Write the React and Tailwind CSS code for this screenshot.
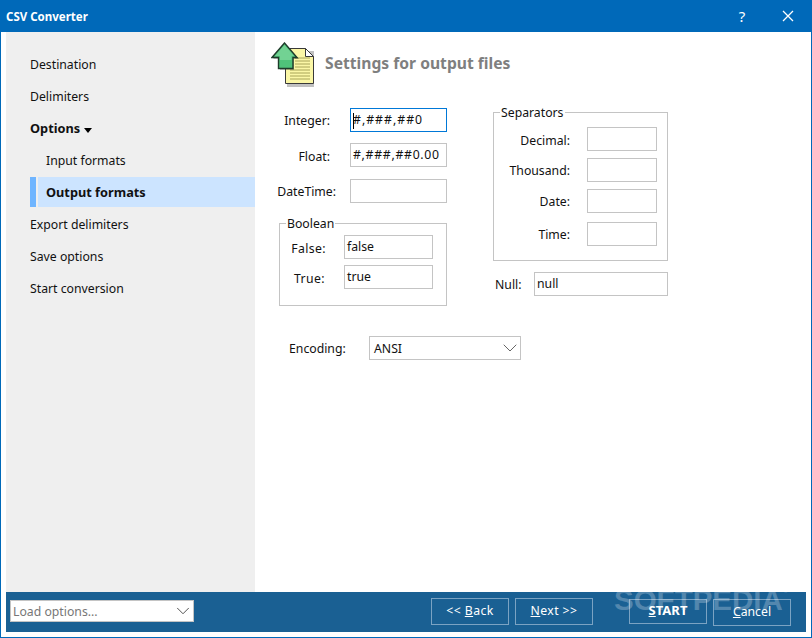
import React from 'react';
import { ChevronDown } from 'lucide-react';

const FONT = "font-['Noto_Sans','Liberation_Sans',sans-serif]";

const navItems = [
    { label: 'Destination' },
    { label: 'Delimiters' },
    { label: 'Options', bold: true, caret: true },
    { label: 'Input formats', sub: true },
    { label: 'Output formats', sub: true, active: true },
    { label: 'Export delimiters' },
    { label: 'Save options' },
    { label: 'Start conversion' },
];

const HeaderIcon = () => (
    <svg width="48" height="46" viewBox="0 0 48 46">
        <path d="M16 9h27v36H16z" fill="#333" opacity="0.3" />
        <path d="M14.500 6.500h20l8 8v27h-28z" fill="#fbf7a6" stroke="#3a3a3a" />
        <path d="M34.500 6.500v8h8z" fill="#fff" stroke="#3a3a3a" />
        <path d="M24 16h15M24 19h15M24 22h15M24 25h15M19 28h20M19 31h20M19 34h20M19 37h20" stroke="#a8a458" />
        <path d="M9 28h14V17h5L15 3 2 17h7z" fill="#333" opacity="0.3" />
        <path d="M13.500 1L1 15.500H7.500V26.500H22V15.500H26z" fill="#4fc27a" stroke="#1e3b2a" strokeWidth="1.400" />
        <path d="M13.500 3L4 14H9V18H20.500V14H23z" fill="#8fe0a8" opacity="0.55" />
    </svg>
);

const Input = ({ value, className = '', focused }) => (
    <div className={`h-[24px] box-border border bg-white px-[2px] text-[12.250px] leading-[22px] text-[#111] whitespace-nowrap ${focused ? 'border-[#0078d7]' : 'border-[#c4c4c4]'} ${className}`}>
        {focused && <span className="inline-block w-px h-[16px] bg-black align-middle -mr-px" />}
        {value}
    </div>
);

const Field = ({ label, labelClass, value, inputClass, focused, className = '' }) => (
    <div className={`flex items-center ${className}`}>
        <div className={`text-[12.250px] text-[#111] text-right whitespace-nowrap box-border pt-[2px] ${labelClass}`}>{label}</div>
        <Input value={value} className={inputClass} focused={focused} />
    </div>
);

const Group = ({ title, className = '', children }) => (
    <fieldset className={`border border-[#c4c4c4] box-border ${className}`}>
        <legend className="ml-[6px] px-px text-[12.250px] leading-[16px] text-[#111]"><span className="block translate-y-px">{title}</span></legend>
        {children}
    </fieldset>
);

const BarButton = ({ children, className = '' }) => (
    <button className={`w-[78px] box-border border border-[#7ba3c3] text-[12.250px] text-white flex items-center justify-center ${className}`}>
        {children}
    </button>
);

const App = () => {
    return (
        <div className={`relative w-[812px] h-[638px] overflow-hidden bg-white flex flex-col ${FONT}`}>
            <div className="h-[32px] shrink-0 bg-[#0069b9] flex items-center pl-[6px] text-white">
                <div className="flex-1 text-[11.500px] font-bold pt-[2px]">CSV Converter</div>
                <div className="w-[20px] mr-[30px] text-center text-[15px]">?</div>
                <svg width="12" height="12" viewBox="0 0 12 12" className="mr-[18px]">
                    <path d="M1 1l10 10M11 1L1 11" stroke="#fff" strokeWidth="1.300" />
                </svg>
            </div>

            <div className="flex-1 flex flex-col border-x border-b border-[#0069b9] px-[5px] pb-[5px] min-h-0">
                <div className="flex-1 flex min-h-0">
                    <div className="w-[249px] shrink-0 bg-[#efefef] pt-[17px] pl-[24px]">
                        {navItems.map((item) => (
                            <div key={item.label} className={`h-[32px] flex items-stretch text-[#111] ${item.bold || item.active ? 'font-bold text-[12.750px]' : 'text-[12.250px]'}`}>
                                {item.active && <div className="w-[6px] h-[30px] bg-[#6fb5ff] mr-[2px]" />}
                                <div className={`h-[30px] flex-1 flex items-center pt-[2px] ${item.active ? 'bg-[#cce4ff] pl-[8px]' : item.sub ? 'pl-[16px]' : ''}`}>
                                    {item.label}
                                    {item.caret && <span className="ml-[4px] mt-[2px] border-x-[4px] border-t-[5px] border-x-transparent border-t-black" />}
                                </div>
                            </div>
                        ))}
                    </div>

                    <div className="flex-1 pl-[16px] pt-[10px]">
                        <div className="flex items-center h-[46px]">
                            <HeaderIcon />
                            <div className="ml-[6px] -mt-[2px] text-[15.660px] font-bold text-[#7f7f7f]">Settings for output files</div>
                        </div>

                        <div className="flex mt-[20px]">
                            <div className="w-[222px] shrink-0">
                                <Field label="Integer:" labelClass="w-[79px] pr-[20px]" value="#,###,##0" inputClass="w-[97px] tracking-[1px]" focused />
                                <Field label="Float:" labelClass="w-[79px] pr-[20px] pt-[4px]" value="#,###,##0.00" inputClass="w-[97px] tracking-[0.7px]" className="mt-[11px]" />
                                <Field label="DateTime:" labelClass="w-[79px] pr-[14px]" value="" inputClass="w-[97px]" className="mt-[12px]" />
                                <Group title="Boolean" className="w-[168px] h-[91px] ml-[8px] mt-[12px]">
                                    <Field label="False:" labelClass="w-[47px] pr-[1px] pt-[4px] tracking-[0.4px]" value="false" inputClass="w-[89px] ml-[17px]" className="mt-[4px]" />
                                    <Field label="True:" labelClass="w-[47px] pr-[2px] pt-[4px] tracking-[0.4px]" value="true" inputClass="w-[89px] ml-[17px]" className="mt-[6px]" />
                                </Group>
                            </div>

                            <div className="w-[175px] shrink-0">
                                <Group title="Separators" className="w-[175px] h-[157px] -mt-[4px]">
                                    <Field label="Decimal:" labelClass="w-[76px] pt-[4px]" value="" inputClass="w-[70px] ml-[17px]" className="mt-[7px]" />
                                    <Field label="Thousand:" labelClass="w-[76px]" value="" inputClass="w-[70px] ml-[17px]" className="mt-[7px]" />
                                    <Field label="Date:" labelClass="w-[76px]" value="" inputClass="w-[70px] ml-[17px]" className="mt-[7px]" />
                                    <Field label="Time:" labelClass="w-[76px]" value="" inputClass="w-[70px] ml-[17px]" className="mt-[9px]" />
                                </Group>
                                <Field label="Null:" labelClass="w-[26px] ml-[2px]" value="null" inputClass="w-[134px] ml-[13px]" className="mt-[11px]" />
                            </div>
                        </div>

                        <div className="flex items-center mt-[30px]">
                            <div className="w-[98px] pl-[18px] pt-[2px] text-[12.250px] text-[#111]">Encoding:</div>
                            <div className="w-[152px] h-[24px] box-border border border-[#c4c4c4] flex items-center justify-between pl-[4px] text-[12.250px] text-[#111]">
                                <span className="pt-[2px]">ANSI</span>
                                <ChevronDown size={24} strokeWidth={0.9} className="text-[#555] -mr-[2px]" />
                            </div>
                        </div>
                    </div>
                </div>

                <div className="h-[40px] shrink-0 bg-[#1a6093] flex items-center pl-[4px]">
                    <div className="w-[184px] h-[22px] box-border border border-[#c4c4c4] bg-white flex items-center justify-between pl-[2px] text-[12.250px] text-[#777] mt-[-2px]">
                        <span className="pt-[3px]">Load options...</span>
                        <ChevronDown size={22} strokeWidth={1} className="text-[#444] -mr-px" />
                    </div>
                    <BarButton className="ml-[237px] h-[27px] mt-[-2px]"><span className="tracking-[0.4px]">&lt;&lt; <u>B</u>ack</span></BarButton>
                    <BarButton className="ml-[6px] h-[27px] mt-[-2px]"><span className="tracking-[0.4px]"><u>N</u>ext &gt;&gt;</span></BarButton>
                    <BarButton className="ml-[36px] h-[25px] mt-[-2px] font-bold text-[13px]"><span><u>S</u>TART</span></BarButton>
                    <BarButton className="ml-[6px] h-[27px]"><span><u>C</u>ancel</span></BarButton>
                </div>
            </div>

            <div className="absolute left-[614px] top-[584px] text-[29.500px] leading-[32px] font-bold text-white/25 font-['Liberation_Sans',sans-serif] whitespace-nowrap pointer-events-none">
                SOFTPEDIA<span className="align-top text-[8px] leading-[14px]">®</span>
            </div>
        </div>
    );
};

export default App;
